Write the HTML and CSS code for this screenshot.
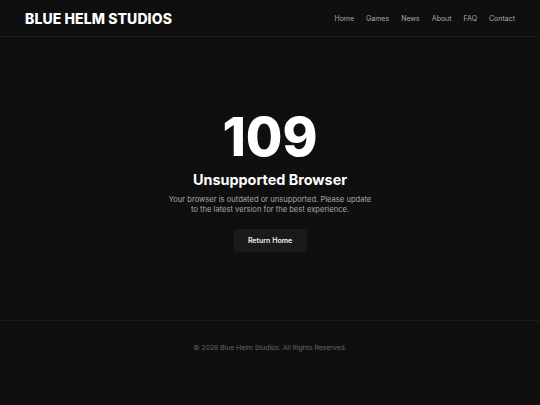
FILE: index.html
```html
<!DOCTYPE html>
<html lang="en">
<head>
<meta charset="utf-8">
<title>109 - Unsupported Browser</title>
<link rel="stylesheet" href="styles.css">
</head>
<body>
<header class="site-header">
  <div class="brand">BLUE HELM STUDIOS</div>
  <nav class="nav">
    <a href="#">Home</a>
    <a href="#">Games</a>
    <a href="#">News</a>
    <a href="#">About</a>
    <a href="#">FAQ</a>
    <a href="#">Contact</a>
  </nav>
</header>
<main class="main">
  <div class="error">
    <div class="code">109</div>
    <h1 class="title">Unsupported Browser</h1>
    <p class="message">Your browser is outdated or unsupported. Please update to the latest version for the best experience.</p>
    <a class="btn" href="#">Return Home</a>
  </div>
</main>
<footer class="site-footer">
  <p>© 2026 Blue Helm Studios. All Rights Reserved.</p>
</footer>
</body>
</html>
```
FILE: styles.css
```css
* { box-sizing: border-box; }
html, body { margin: 0; padding: 0; }
body {
  background: #0f0f0f;
  color: #fff;
  font-family: Inter, "Liberation Sans", sans-serif;
  width: 540px;
  height: 405px;
  display: flex;
  flex-direction: column;
}
.site-header {
  height: 37px;
  display: flex;
  align-items: center;
  justify-content: space-between;
  padding: 0 25px;
  border-bottom: 1px solid #1b1b1b;
}
.brand {
  font-size: 14px;
  font-weight: 800;
  letter-spacing: 0.1px;
}
.nav {
  display: flex;
  gap: 12px;
}
.nav a {
  color: #a8a8a8;
  text-decoration: none;
  font-size: 7px;
}
.main {
  flex: 1;
  display: flex;
  align-items: center;
  justify-content: center;
  padding-top: 6px;
}
.error {
  display: flex;
  flex-direction: column;
  align-items: center;
  text-align: center;
}
.code {
  font-size: 53px;
  font-weight: 800;
  line-height: 1;
  letter-spacing: 0;
}
.title {
  margin: 7px 0 0;
  font-size: 14.4px;
  font-weight: 700;
  line-height: 1.2;
}
.message {
  margin: 7px 0 0;
  width: 210px;
  font-size: 7.6px;
  line-height: 9.5px;
  color: #a8a8a8;
}
.btn {
  margin-top: 15px;
  display: inline-flex;
  align-items: center;
  justify-content: center;
  width: 73px;
  height: 23px;
  background: #1a1a1a;
  border-radius: 4px;
  color: #f2f2f2;
  font-size: 7px;
  font-weight: 600;
  text-decoration: none;
}
.site-footer {
  height: 85px;
  border-top: 1px solid #1b1b1b;
  text-align: center;
  padding-top: 22px;
}
.site-footer p {
  margin: 0;
  font-size: 6.8px;
  color: #666;
}
```
